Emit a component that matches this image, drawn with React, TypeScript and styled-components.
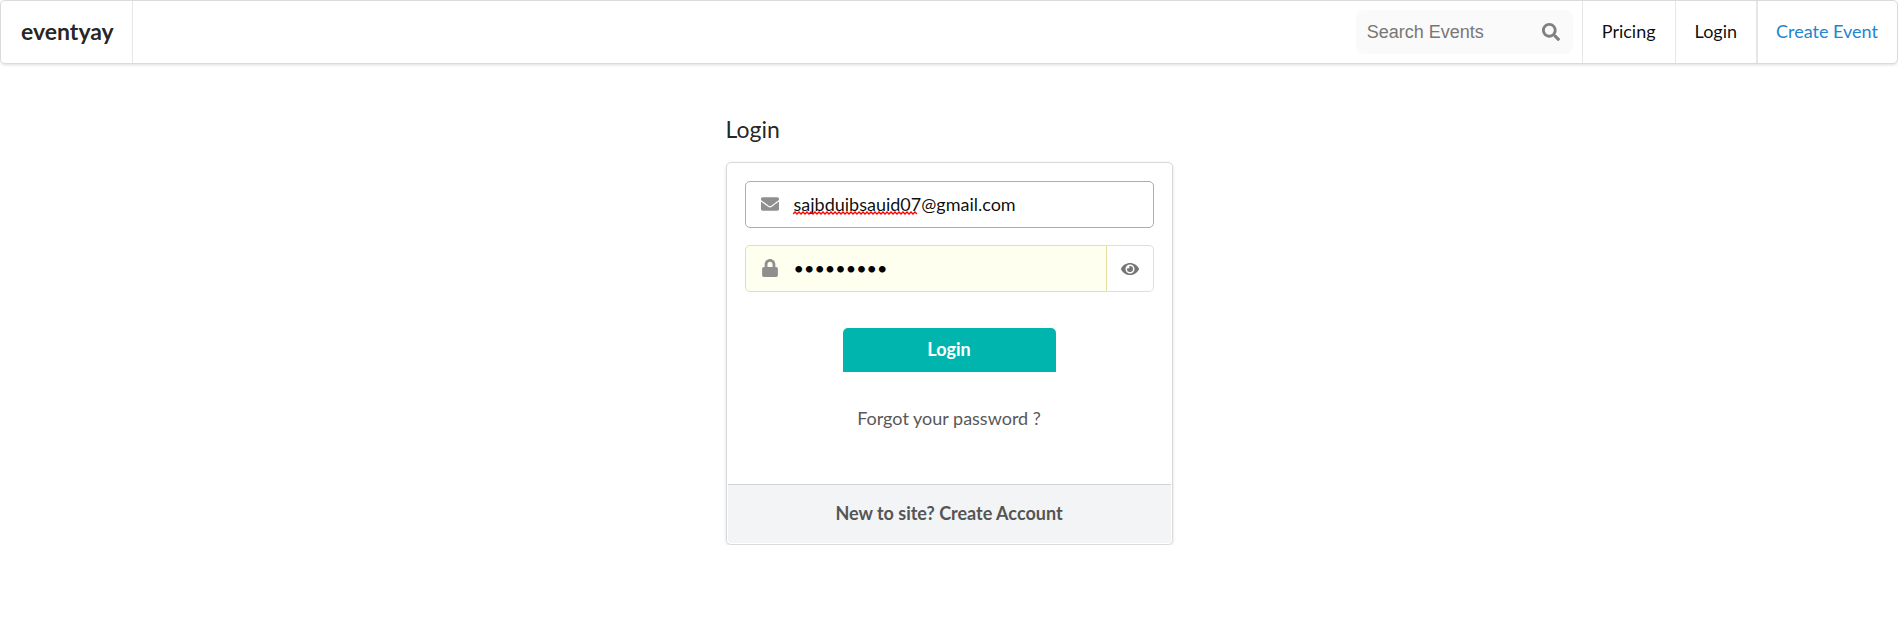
import React, { useState } from 'react';
import styled, { createGlobalStyle, css } from 'styled-components';
import { FaEnvelope, FaEye, FaLock, FaSearch } from 'react-icons/fa';

const GlobalStyle = createGlobalStyle`
  *, *::before, *::after { box-sizing: border-box; }
  body {
    margin: 0;
    background: #fff;
    color: rgba(0, 0, 0, 0.87);
    font-family: Lato, 'Liberation Sans', sans-serif;
    font-size: 18px;
    line-height: 24px;
  }
  a { text-decoration: none; }
  input, button { font: inherit; margin: 0; }
`;

const NavBar = styled.nav`
  display: flex;
  justify-content: space-between;
  height: 64px;
  border: 1px solid #d9dadb;
  border-radius: 5px;
  box-shadow: 0 1px 3px rgba(34, 36, 38, 0.15);
`;

const NavGroup = styled.div`
  display: flex;
  align-items: stretch;
`;

const Brand = styled.a`
  display: flex;
  align-items: center;
  padding: 0 18px 2px 20px;
  border-right: 1px solid #e6e6e7;
  color: rgba(0, 0, 0, 0.87);
  font-size: 23px;
  font-weight: 700;
`;

const NavLink = styled.a<{ $accent?: boolean }>`
  display: flex;
  align-items: center;
  padding: 0 19px 2px;
  border-left: ${({ $accent }) => ($accent ? 2 : 1)}px solid #e6e6e7;
  color: ${({ $accent }) => ($accent ? '#2185d0' : 'rgba(0, 0, 0, 0.95)')};
  ${({ $accent }) => $accent && 'padding-left: 18px;'}
`;

const SearchForm = styled.form`
  display: flex;
  align-items: center;
  align-self: center;
  width: 217px;
  height: 44px;
  margin-right: 9px;
  padding: 0 13px 0 11px;
  border-radius: 8px;
  background: #fafafa;
`;

const SearchInput = styled.input`
  flex: 1;
  min-width: 0;
  padding: 0;
  border: 0;
  outline: 0;
  background: transparent;
  font-family: 'Liberation Sans', Arial, sans-serif;
  &::placeholder { color: #777; opacity: 1; }
`;

const IconButton = styled.button`
  display: flex;
  align-items: center;
  justify-content: center;
  padding: 0;
  border: 0;
  background: transparent;
  color: #808080;
  cursor: pointer;
`;

const Main = styled.main`
  width: 100%;
  max-width: 447px;
  margin: 50px auto 0;
`;

const Title = styled.h1`
  margin: 0 0 18px;
  font-size: 23px;
  font-weight: 400;
  line-height: 30px;
`;

const Card = styled.section`
  padding: 1px;
  border: 1px solid #d9dadb;
  border-radius: 5px;
  box-shadow: 0 1px 3px rgba(34, 36, 38, 0.15);
`;

const LoginForm = styled.form`
  display: flex;
  flex-direction: column;
  gap: 17px;
  padding: 17px 17px 0;
`;

const Field = styled.div`
  position: relative;
  display: flex;
  height: 47px;
`;

const FieldIcon = styled.label`
  position: absolute;
  top: 0;
  bottom: 0;
  left: 16px;
  display: flex;
  align-items: center;
  padding-bottom: 2px;
  color: #8f8f8f;
`;

const TextInput = styled.input<{ $filled?: boolean }>`
  flex: 1;
  min-width: 0;
  padding: 0 16px 1px 48px;
  border: 1px solid #85b7d9;
  border-radius: 5px;
  outline: 0;
  background: #fff;
  color: rgba(0, 0, 0, 0.95);
  ${({ $filled }) =>
    $filled &&
    css`
      border-color: #e5dfa1;
      border-radius: 5px 0 0 5px;
      background: #fffff0;
      color: #000;
    `}
`;

const RevealButton = styled(IconButton)`
  width: 47px;
  border: 1px solid #dededf;
  border-left: 0;
  border-radius: 0 5px 5px 0;
  color: #767676;
`;

const Squiggle = styled.svg`
  position: absolute;
  top: 30px;
  left: 48px;
  pointer-events: none;
`;

const SubmitButton = styled.button`
  align-self: center;
  width: 213px;
  height: 44px;
  margin-top: 19px;
  padding: 0 0 2px;
  border: 0;
  border-radius: 5px 5px 0 0;
  background: #00b5ad;
  color: #fff;
  font-weight: 700;
  cursor: pointer;
`;

const ForgotLink = styled.a`
  display: block;
  padding: 34px 0 54px;
  color: #585858;
  text-align: center;
`;

const CardFooter = styled.footer`
  padding: 16px 0 18px;
  border-top: 1px solid #d4d4d5;
  border-radius: 0 0 4px 4px;
  background: #f3f4f5;
  text-align: center;
  a { color: #555; font-weight: 700; }
`;

const squigglePoints = Array.from({ length: 63 }, (_, i) => `${i * 2},${i % 2 ? 1 : 3}`).join(' ');

export default function App() {
  const [email, setEmail] = useState('sajbduibsauid07@gmail.com');
  const [password, setPassword] = useState('password1');
  const [revealed, setRevealed] = useState(false);

  return (
    <>
      <GlobalStyle />
      <NavBar>
        <NavGroup>
          <Brand href="#">eventyay</Brand>
        </NavGroup>
        <NavGroup>
          <SearchForm role="search" onSubmit={(e) => e.preventDefault()}>
            <SearchInput type="text" placeholder="Search Events" aria-label="Search Events" />
            <IconButton type="submit" aria-label="Search">
              <FaSearch size={18} />
            </IconButton>
          </SearchForm>
          <NavLink href="#pricing">Pricing</NavLink>
          <NavLink href="#login">Login</NavLink>
          <NavLink href="#create" $accent>Create Event</NavLink>
        </NavGroup>
      </NavBar>
      <Main>
        <Title>Login</Title>
        <Card>
          <LoginForm onSubmit={(e) => e.preventDefault()}>
            <Field>
              <TextInput
                id="email"
                type="text"
                spellCheck={false}
                value={email}
                onChange={(e) => setEmail(e.target.value)}
              />
              <FieldIcon htmlFor="email" aria-label="Email">
                <FaEnvelope size={18} />
              </FieldIcon>
              <Squiggle width="125" height="4" viewBox="0 0 125 4" aria-hidden="true">
                <polyline points={squigglePoints} fill="none" stroke="#f00" strokeWidth="1.4" />
              </Squiggle>
            </Field>
            <Field>
              <TextInput
                id="password"
                type={revealed ? 'text' : 'password'}
                $filled
                value={password}
                onChange={(e) => setPassword(e.target.value)}
              />
              <FieldIcon htmlFor="password" aria-label="Password">
                <FaLock size={18} />
              </FieldIcon>
              <RevealButton
                type="button"
                aria-label="Show password"
                onClick={() => setRevealed(!revealed)}
              >
                <FaEye size={18} />
              </RevealButton>
            </Field>
            <SubmitButton type="submit">Login</SubmitButton>
          </LoginForm>
          <ForgotLink href="#forgot">Forgot your password ?</ForgotLink>
          <CardFooter>
            <a href="#register">New to site? Create Account</a>
          </CardFooter>
        </Card>
      </Main>
    </>
  );
}
